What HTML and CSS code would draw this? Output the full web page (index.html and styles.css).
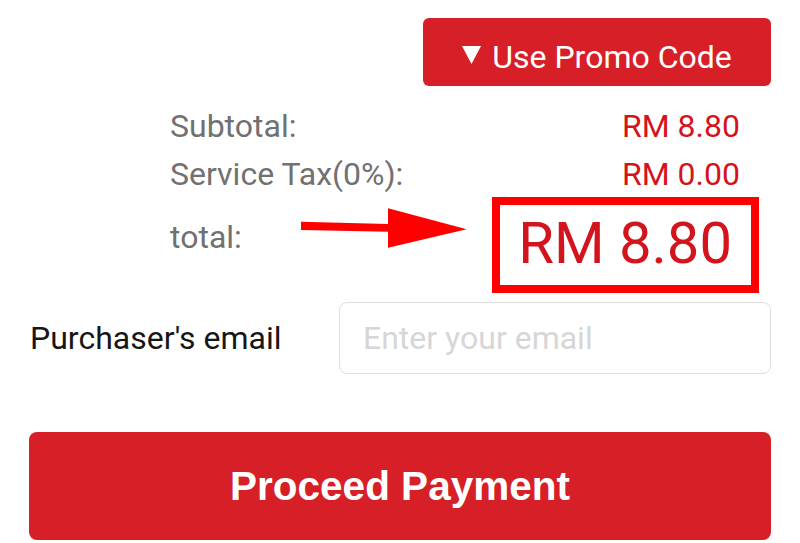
FILE: index.html
```html
<!DOCTYPE html>
<html>
<head>
<meta charset="utf-8">
<link rel="stylesheet" href="styles.css">
</head>
<body>
<div class="page">
  <div class="promo-row">
    <button class="promo-btn">
      <svg class="tri" width="19" height="18" viewBox="0 0 19 18"><polygon points="0,0 19,0 9.5,18" fill="#fff"/></svg>
      <span>Use Promo Code</span>
    </button>
  </div>

  <div class="summary">
    <div class="row">
      <span class="label">Subtotal:</span>
      <span class="value">RM 8.80</span>
    </div>
    <div class="row">
      <span class="label">Service Tax(0%):</span>
      <span class="value">RM 0.00</span>
    </div>
    <div class="total-row">
      <span class="label total-label">total:</span>
      <svg class="arrow" width="180" height="50" viewBox="0 0 180 50">
        <polygon points="6,19.7 93,22 93,6.3 171.7,27.3 93,45.7 93,29.7 6,28" fill="#ff0000"/>
      </svg>
      <div class="total-box">RM 8.80</div>
    </div>
  </div>

  <div class="email-row">
    <label class="email-label" for="email">Purchaser's email</label>
    <input id="email" class="email-input" type="text" placeholder="Enter your email">
  </div>

  <div class="proceed-row">
    <button class="proceed-btn">Proceed Payment</button>
  </div>
</div>
</body>
</html>
```

FILE: styles.css
```css
* { box-sizing: border-box; }

html, body {
  margin: 0;
  padding: 0;
  background: #ffffff;
}

body {
  font-family: Roboto, "Liberation Sans", Arial, sans-serif;
  width: 800px;
  height: 543px;
  overflow: hidden;
}

.page {
  padding-top: 18px;
}

.promo-row {
  display: flex;
  justify-content: flex-end;
  padding-right: 29px;
}

.promo-btn {
  width: 348px;
  height: 68px;
  border: none;
  border-radius: 6px;
  background: #d71f27;
  color: #ffffff;
  font-family: Roboto, "Liberation Sans", Arial, sans-serif;
  font-size: 32px;
  line-height: 36px;
  display: flex;
  align-items: center;
  justify-content: center;
  gap: 11px;
  padding: 9px 0 0 0;
}

.promo-btn .tri {
  display: block;
  margin-top: -3px;
}

.summary {
  margin: 22px 41px 0 170px;
  display: flex;
  flex-direction: column;
  gap: 12px;
}

.row {
  display: flex;
  justify-content: space-between;
  padding-right: 19px;
  font-size: 32px;
  line-height: 36px;
}

.label {
  color: #717171;
}

.value {
  color: #d3141c;
}

.total-row {
  position: relative;
  display: flex;
  margin-top: -7px;
  font-size: 32px;
  line-height: 36px;
}

.total-label {
  align-self: flex-start;
  margin-top: 22px;
}

.arrow {
  position: absolute;
  left: 125px;
  top: 5px;
}

.total-box {
  margin-left: auto;
  width: 267px;
  height: 96px;
  border: 8px solid #ff0000;
  padding: 6px 19px 0 0;
  text-align: right;
  font-size: 58px;
  line-height: 64px;
  color: #d3141c;
}

.email-row {
  display: flex;
  align-items: center;
  margin-top: 9px;
  padding: 0 29px 0 30px;
}

.email-label {
  font-size: 32px;
  line-height: 36px;
  color: #161616;
}

.email-input {
  margin-left: auto;
  width: 432px;
  height: 72px;
  border: 1.5px solid #dedede;
  border-radius: 8px;
  padding: 0 0 0 23px;
  font-family: Roboto, "Liberation Sans", Arial, sans-serif;
  font-size: 32px;
  color: #222;
  background: #ffffff;
  outline: none;
}

.email-input::placeholder {
  color: #d6d6d6;
}

.proceed-row {
  margin-top: 58px;
  padding: 0 29px;
}

.proceed-btn {
  display: block;
  width: 100%;
  height: 108px;
  border: none;
  border-radius: 8px;
  background: #d71f27;
  color: #ffffff;
  font-family: "Liberation Sans", Arial, sans-serif;
  font-weight: bold;
  font-size: 40.5px;
  line-height: 46px;
  padding: 0;
}
```
